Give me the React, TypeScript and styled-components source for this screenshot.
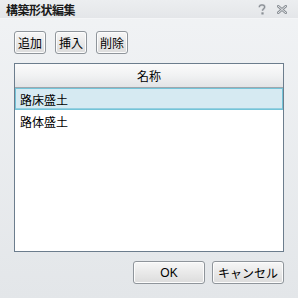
import styled, { createGlobalStyle } from "styled-components"

const GlobalStyle = createGlobalStyle`
    html, body {
        margin: 0;
        padding: 0;
        width: 298px;
        height: 298px;
        overflow: hidden;
    }
    body {
        font-family: "Noto Sans CJK JP", "Liberation Sans", sans-serif;
        font-size: 12px;
        color: #000;
    }
`

const rows = ["路床盛土", "路体盛土"]

const HelpIcon = () => (
    <svg width="8" height="11" viewBox="0 0 8 11">
        <path d="M1.3 3.2 C1.3 1.6 2.5 0.9 4 0.9 C5.6 0.9 6.7 1.8 6.7 3 C6.7 4.6 4.5 4.9 4.5 6.8" fill="none" stroke="#d3d6da" strokeWidth="2.6" />
        <path d="M1.3 3.2 C1.3 1.6 2.5 0.9 4 0.9 C5.6 0.9 6.7 1.8 6.7 3 C6.7 4.6 4.5 4.9 4.5 6.8" fill="none" stroke="#8a8f95" strokeWidth="1.2" />
        <rect x="3.4" y="8.3" width="2.2" height="2.2" fill="#8a8f95" />
    </svg>
)

const CloseIcon = () => (
    <svg width="10" height="9" viewBox="0 0 10 9">
        <path d="M1.2 1.2 L8.8 7.8 M8.8 1.2 L1.2 7.8" stroke="#8a8f95" strokeWidth="2.6" strokeLinecap="square" />
        <path d="M1.2 1.2 L8.8 7.8 M8.8 1.2 L1.2 7.8" stroke="#eceef0" strokeWidth="0.9" strokeLinecap="square" />
    </svg>
)

const App = () => {
    return <Dialog>
        <GlobalStyle />
        <TitleBar>
            <Title>構築形状編集</Title>
            <TitleIcons>
                <HelpIcon />
                <CloseIcon />
            </TitleIcons>
        </TitleBar>
        <Body>
            <Toolbar>
                <Button>追加</Button>
                <Button>挿入</Button>
                <Button>削除</Button>
            </Toolbar>
            <List>
                <ListHeader>名称</ListHeader>
                {rows.map((r, i) => <Row key={r} selected={i === 0}>{r}</Row>)}
            </List>
            <Footer>
                <DialogButton>OK</DialogButton>
                <DialogButton>キャンセル</DialogButton>
            </Footer>
        </Body>
    </Dialog>
}

const Dialog = styled.div`
    width: 298px;
    height: 298px;
    display: flex;
    flex-direction: column;
    background: linear-gradient(#f1f3f5, #e3e6e9);
    box-sizing: border-box;
`

const TitleBar = styled.div`
    height: 18px;
    display: flex;
    align-items: center;
    justify-content: space-between;
    padding: 0 11px 0 6px;
    background: linear-gradient(#eceef0, #e4e6e9);
    border-bottom: 1px solid #f4f5f7;
`

const Title = styled.div`
    font-weight: bold;
    font-size: 12px;
    letter-spacing: -0.5px;
    color: #1a1a1a;
`

const TitleIcons = styled.div`
    display: flex;
    align-items: center;
    gap: 11px;
`

const Body = styled.div`
    flex: 1;
    display: flex;
    flex-direction: column;
    padding: 12px 14px 14px 14px;
`

const Toolbar = styled.div`
    display: flex;
    gap: 9px;
`

const Button = styled.div`
    height: 21px;
    padding: 0 3px;
    display: flex;
    align-items: center;
    border: 1px solid #8f959b;
    border-radius: 3px;
    background: linear-gradient(#f7f7f7, #e9e9e9 50%, #dcdcdc);
    box-shadow: inset 0 0 0 1px #fcfcfc;
`

const List = styled.div`
    margin-top: 9px;
    flex: 1;
    border: 1px solid #6c7d8d;
    background: #fff;
    display: flex;
    flex-direction: column;
`

const ListHeader = styled.div`
    height: 23px;
    display: flex;
    align-items: center;
    justify-content: center;
    background: linear-gradient(#fbfbfb, #f1f2f3 50%, #e2e4e6);
    border-bottom: 1px solid #9ea6ad;
`

const Row = styled.div<{ selected?: boolean }>`
    height: 22px;
    display: flex;
    align-items: center;
    padding-left: 4px;
    box-sizing: border-box;
    border: 1px solid ${p => p.selected ? "#74c4d8" : "transparent"};
    background: ${p => p.selected ? "#d6eaf2" : "#fff"};
    box-shadow: ${p => p.selected ? "inset 0 -1px 0 #95cfe0" : "none"};
`

const Footer = styled.div`
    margin-top: 9px;
    display: flex;
    justify-content: flex-end;
    gap: 7px;
`

const DialogButton = styled(Button)`
    width: 72px;
    box-sizing: border-box;
    height: 23px;
    justify-content: center;
    padding: 0;
    font-family: "Liberation Sans", "Noto Sans CJK JP", sans-serif;
`

export default App
